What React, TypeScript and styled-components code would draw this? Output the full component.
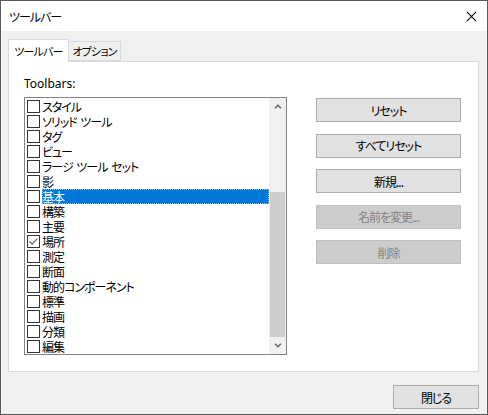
import styled, { createGlobalStyle } from "styled-components";

const GlobalStyle = createGlobalStyle`
  html, body {
    margin: 0;
    padding: 0;
    background: #ffffff;
  }
  body {
    font-family: "Noto Sans CJK JP", sans-serif;
    font-size: 12px;
    font-feature-settings: "palt";
    letter-spacing: -1px;
    word-spacing: 2px;
    color: #000;
  }
`;

type Toolbar = { name: string; checked?: boolean; selected?: boolean };

const toolbars: Toolbar[] = [
  { name: "スタイル" },
  { name: "ソリッド ツール" },
  { name: "タグ" },
  { name: "ビュー" },
  { name: "ラージ ツール セット" },
  { name: "影" },
  { name: "基本", selected: true },
  { name: "構築" },
  { name: "主要" },
  { name: "場所", checked: true },
  { name: "測定" },
  { name: "断面" },
  { name: "動的コンポーネント" },
  { name: "標準" },
  { name: "描画" },
  { name: "分類" },
  { name: "編集" },
];

const buttons = [
  { label: "リセット" },
  { label: "すべてリセット" },
  { label: "新規..." },
  { label: "名前を変更...", disabled: true },
  { label: "削除", disabled: true },
];

const App: React.FC<{}> = () => {
  return (
    <>
      <GlobalStyle />
      <Window>
        <TitleBar>
          <span>ツールバー</span>
          <CloseIcon viewBox="0 0 12 12">
            <path d="M1 1 L11 11 M11 1 L1 11" stroke="#000" strokeWidth="1.1" fill="none" />
          </CloseIcon>
        </TitleBar>
        <Body>
          <TabStrip>
            <Tab $active>ツールバー</Tab>
            <Tab>オプション</Tab>
          </TabStrip>
          <Panel>
            <LeftCol>
              <Label>Toolbars:</Label>
              <ListBox>
                <Items>
                  {toolbars.map((t) => (
                    <Row key={t.name}>
                      <Check>
                        {t.checked && (
                          <svg width="11" height="11" viewBox="0 0 11 11">
                            <path d="M1.5 5.5 L4.2 8.2 L9.5 2.5" stroke="#5c5c5c" strokeWidth="1.1" fill="none" />
                          </svg>
                        )}
                      </Check>
                      <ItemText $selected={!!t.selected}>{t.name}</ItemText>
                    </Row>
                  ))}
                </Items>
                <ScrollBar>
                  <Arrow>
                    <svg width="8" height="5" viewBox="0 0 8 5">
                      <path d="M1 4.2 L4 1.2 L7 4.2" stroke="#606060" strokeWidth="1.4" fill="none" />
                    </svg>
                  </Arrow>
                  <Track>
                    <Thumb />
                  </Track>
                  <Arrow>
                    <svg width="8" height="5" viewBox="0 0 8 5">
                      <path d="M1 0.8 L4 3.8 L7 0.8" stroke="#606060" strokeWidth="1.4" fill="none" />
                    </svg>
                  </Arrow>
                </ScrollBar>
              </ListBox>
            </LeftCol>
            <RightCol>
              {buttons.map((b) => (
                <Button key={b.label} $disabled={!!b.disabled}>
                  {b.label}
                </Button>
              ))}
            </RightCol>
          </Panel>
          <Footer>
            <CloseButton>閉じる</CloseButton>
          </Footer>
        </Body>
      </Window>
    </>
  );
};

export default App;

const Window = styled.div`
  width: 488px;
  height: 415px;
  box-sizing: border-box;
  border: 1px solid #5a5a5a;
  display: flex;
  flex-direction: column;
  background: #f0f0f0;
`;

const TitleBar = styled.div`
  height: 30px;
  background: #ffffff;
  display: flex;
  align-items: center;
  justify-content: space-between;
  padding: 0 10px 0 8px;
  font-size: 12px;
`;

const CloseIcon = styled.svg`
  width: 11px;
  height: 11px;
`;

const Body = styled.div`
  flex: 1;
  display: flex;
  flex-direction: column;
  padding: 8px 8px 0 7px;
`;

const TabStrip = styled.div`
  display: flex;
  align-items: flex-end;
  height: 22px;
  position: relative;
  z-index: 1;
`;

const Tab = styled.div<{ $active?: boolean }>`
  box-sizing: border-box;
  flex: none;
  width: ${(p) => (p.$active ? "61px" : "52px")};
  height: ${(p) => (p.$active ? "23px" : "20px")};
  margin-bottom: ${(p) => (p.$active ? "-1px" : "0")};
  font-size: 11px;
  letter-spacing: -0.8px;
  white-space: nowrap;
  display: flex;
  align-items: center;
  justify-content: center;
  border: 1px solid #d9d9d9;
  border-bottom: ${(p) => (p.$active ? "none" : "1px solid #d9d9d9")};
  background: ${(p) => (p.$active ? "#ffffff" : "#f0f0f0")};
  & + & {
    border-left: none;
  }
`;

const Panel = styled.div`
  box-sizing: border-box;
  width: 471px;
  height: 311px;
  background: #ffffff;
  border: 1px solid #d9d9d9;
  display: flex;
  align-items: flex-start;
  padding: 14px 0 0 15px;
  gap: 29px;
`;

const LeftCol = styled.div`
  display: flex;
  flex-direction: column;
`;

const Label = styled.div`
  font-family: "Noto Sans", sans-serif;
  font-size: 12px;
  letter-spacing: 0;
  line-height: 15px;
  height: 15px;
  margin-bottom: 6px;
`;

const ListBox = styled.div`
  box-sizing: border-box;
  width: 263px;
  height: 258px;
  border: 1px solid #828282;
  display: flex;
`;

const Items = styled.div`
  flex: 1;
  padding: 1px 0 0 2px;
`;

const Row = styled.div`
  height: 15px;
  display: flex;
  align-items: center;
  gap: 2px;
`;

const Check = styled.div`
  box-sizing: border-box;
  width: 13px;
  height: 13px;
  border: 1px solid #333333;
  background: #ffffff;
  display: flex;
  align-items: center;
  justify-content: center;
`;

const ItemText = styled.div<{ $selected: boolean }>`
  flex: 1;
  height: 15px;
  line-height: 15px;
  box-sizing: border-box;
  background: ${(p) => (p.$selected ? "#0078d7" : "transparent")};
  color: ${(p) => (p.$selected ? "#ffffff" : "#000000")};
  outline: ${(p) => (p.$selected ? "1px dotted #8fc0ee" : "none")};
  outline-offset: -1px;
`;

const ScrollBar = styled.div`
  width: 17px;
  background: #f0f0f0;
  display: flex;
  flex-direction: column;
`;

const Arrow = styled.div`
  height: 17px;
  display: flex;
  align-items: center;
  justify-content: center;
`;

const Track = styled.div`
  flex: 1;
  padding-top: 77px;
  display: flex;
  flex-direction: column;
`;

const Thumb = styled.div`
  height: 145px;
  margin: 0 1px;
  background: #cdcdcd;
`;

const RightCol = styled.div`
  display: flex;
  flex-direction: column;
  gap: 11.5px;
  padding-top: 22px;
`;

const Button = styled.div<{ $disabled: boolean }>`
  box-sizing: border-box;
  width: 145px;
  height: 24px;
  display: flex;
  align-items: center;
  justify-content: center;
  background: ${(p) => (p.$disabled ? "#cccccc" : "#e1e1e1")};
  border: 1px solid ${(p) => (p.$disabled ? "#bfbfbf" : "#adadad")};
  color: ${(p) => (p.$disabled ? "#838383" : "#000000")};
`;

const Footer = styled.div`
  display: flex;
  justify-content: flex-end;
  padding-top: 13px;
`;

const CloseButton = styled(Button).attrs({ $disabled: false })`
  width: 86px;
`;
